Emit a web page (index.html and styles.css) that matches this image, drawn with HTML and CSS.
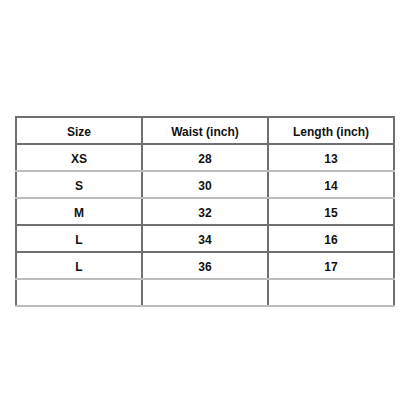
FILE: index.html
```html
<!DOCTYPE html>
<html>
<head>
<meta charset="utf-8">
<link rel="stylesheet" href="styles.css">
</head>
<body>
<table class="size-table">
  <tr class="row dark">
    <th>Size</th><th>Waist (inch)</th><th>Length (inch)</th>
  </tr>
  <tr class="row light">
    <td>XS</td><td>28</td><td>13</td>
  </tr>
  <tr class="row light">
    <td>S</td><td>30</td><td>14</td>
  </tr>
  <tr class="row dark">
    <td>M</td><td>32</td><td>15</td>
  </tr>
  <tr class="row dark">
    <td>L</td><td>34</td><td>16</td>
  </tr>
  <tr class="row light">
    <td>L</td><td>36</td><td>17</td>
  </tr>
  <tr class="row light">
    <td></td><td></td><td></td>
  </tr>
</table>
</body>
</html>
```
FILE: styles.css
```css
html, body {
  margin: 0;
  padding: 0;
  background: #fff;
}
body {
  padding: 116px 0 0 15px;
  font-family: "Liberation Sans", Arial, sans-serif;
  font-size: 12px;
  font-weight: bold;
  color: #111;
}
.size-table {
  border-collapse: collapse;
  width: 380px;
  table-layout: fixed;
}
.size-table th,
.size-table td {
  box-sizing: border-box;
  height: 27px;
  padding: 2px 0 0 0;
  text-align: center;
  vertical-align: middle;
  border-left: 2px solid #6f6f6f;
  border-right: 2px solid #6f6f6f;
  font-weight: bold;
  line-height: 14px;
}
.size-table th {
  border-top: 2px solid #6f6f6f;
}
.row.dark th,
.row.dark td {
  border-bottom: 2px solid #707070;
}
.row.light th,
.row.light td {
  border-bottom: 2px solid #bdbdbd;
}
```
